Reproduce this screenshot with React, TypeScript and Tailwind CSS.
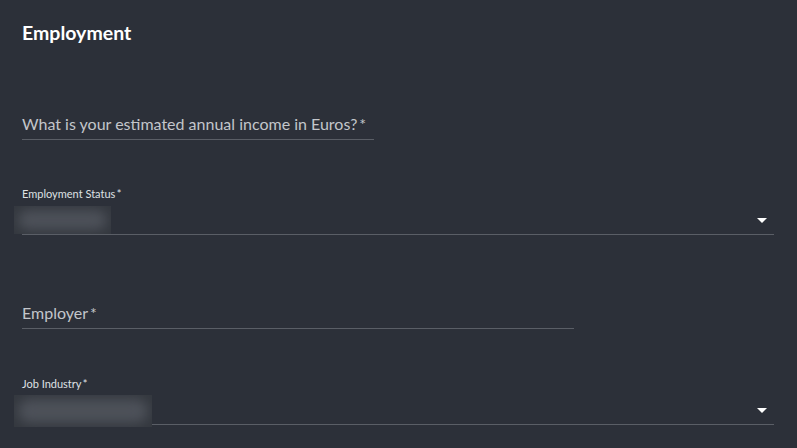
import React from 'react'

function Caret() {
  return (
    <svg width="10" height="5" viewBox="0 0 10 5" className="block">
      <path d="M0 0 L10 0 L5 5 Z" fill="#ffffff" />
    </svg>
  )
}

function TextField({ label, width }: { label: string; width: string }) {
  return (
    <div className={`${width} border-b border-[#5a5e66] pb-[3px]`}>
      <span className="text-[16px] leading-[20px] text-[#c3c6cb]">
        {label}
        {'\u2009*'}
      </span>
    </div>
  )
}

function SelectField({
  label,
  blurClass,
}: {
  label: string
  blurClass: string
}) {
  return (
    <div className="w-[752px]">
      <div className="text-[11px] leading-[14px] text-[#dfe1e4]">
        {label}
        {'\u2009*'}
      </div>
      <div className="relative mt-[5px] flex h-[29px] items-center justify-end border-b border-[#5a5e66] pr-[7px]">
        <Caret />
        <div
          className={`absolute -left-[8px] overflow-hidden bg-[#34383f] ${blurClass}`}
        >
          <div className="absolute inset-[4px] rounded-full bg-[#4d5159] blur-[6px]" />
        </div>
      </div>
    </div>
  )
}

export default function App() {
  return (
    <div
      className="h-[448px] w-[797px] bg-[#2c3039] px-[22px] pt-[21px]"
      style={{ fontFamily: 'Lato, "Open Sans", sans-serif' }}
    >
      <h2 className="text-[19.5px] font-bold leading-[23px] text-white">Employment</h2>

      <div className="mt-[68px]">
        <TextField label="What is your estimated annual income in Euros?" width="w-[352px]" />
      </div>

      <div className="mt-[47px]">
        <SelectField label="Employment Status" blurClass="top-0 h-[28px] w-[97px]" />
      </div>

      <div className="mt-[66px]">
        <TextField label="Employer" width="w-[552px]" />
      </div>

      <div className="mt-[48px]">
        <SelectField label="Job Industry" blurClass="-top-[1px] h-[32px] w-[138px]" />
      </div>
    </div>
  )
}
